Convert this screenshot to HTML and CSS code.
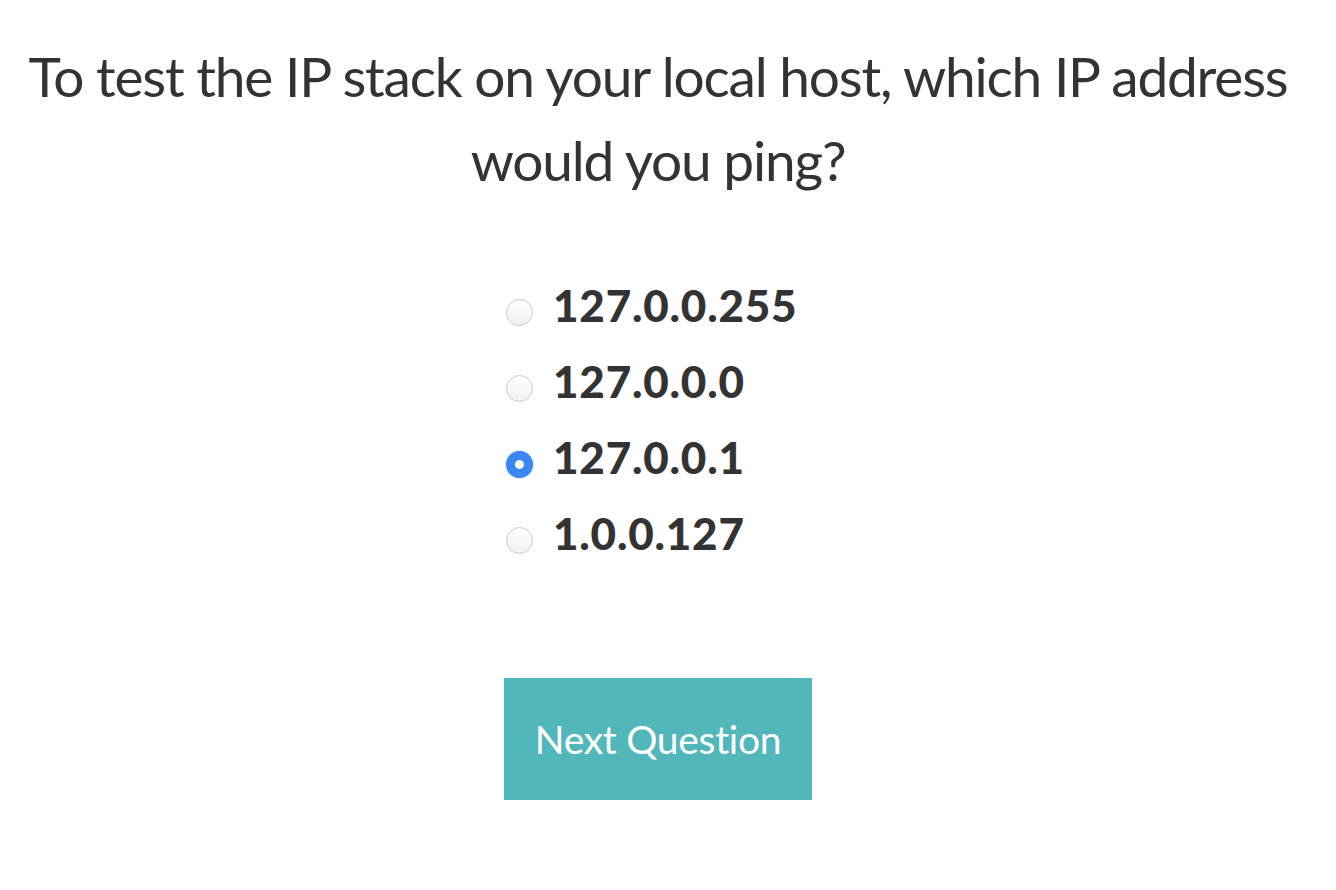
FILE: index.html
```html
<!DOCTYPE html>
<html lang="en">
<head>
<meta charset="utf-8">
<title>Quiz</title>
<link rel="stylesheet" href="styles.css">
</head>
<body>
<main class="quiz">
  <h1 class="question">To test the IP stack on your local host, which IP address would you ping?</h1>
  <div class="body">
    <form class="options">
      <label class="option"><input type="radio" name="ans" class="radio"><span class="opt-text">127.0.0.255</span></label>
      <label class="option"><input type="radio" name="ans" class="radio"><span class="opt-text">127.0.0.0</span></label>
      <label class="option"><input type="radio" name="ans" class="radio" checked><span class="opt-text">127.0.0.1</span></label>
      <label class="option"><input type="radio" name="ans" class="radio"><span class="opt-text">1.0.0.127</span></label>
    </form>
    <button class="next" type="button">Next Question</button>
  </div>
</main>
</body>
</html>
```

FILE: styles.css
```css
* { box-sizing: border-box; }
html, body { margin: 0; padding: 0; background: #fff; }
body {
  font-family: Lato, "Noto Sans", sans-serif;
  color: #333;
}
.quiz {
  display: flex;
  flex-direction: column;
  align-items: center;
  padding: 34px 20px 0 0;
}
.question {
  margin: 0;
  font-size: 55px;
  line-height: 84px;
  font-weight: 400;
  letter-spacing: -1.2px;
  text-align: center;
  width: 1300px;
}
.body {
  width: 308px;
  display: flex;
  flex-direction: column;
}
.options {
  display: flex;
  flex-direction: column;
  padding-top: 65px;
}
.option {
  display: flex;
  align-items: center;
  height: 76px;
  cursor: pointer;
}
.radio {
  appearance: none;
  -webkit-appearance: none;
  width: 27px;
  height: 27px;
  margin: 14px 20px 0 2px;
  border-radius: 50%;
  border: 1px solid #c9c9c9;
  background: linear-gradient(#ffffff, #f0f0f0);
  flex: none;
}
.radio:checked {
  border: 9px solid #3a86f4;
  background: #fff;
  box-shadow: 0 0 2px rgba(58, 134, 244, 0.5);
}
.opt-text {
  font-size: 44px;
  font-weight: 900;
  letter-spacing: 0.8px;
  line-height: 1;
}
.next {
  margin-top: 107px;
  width: 308px;
  height: 122px;
  border: 0;
  background: #52b7ba;
  color: #fff;
  font-family: Lato, "Noto Sans", sans-serif;
  font-size: 39px;
  font-weight: 400;
  letter-spacing: -0.3px;
  padding: 0;
}
```
